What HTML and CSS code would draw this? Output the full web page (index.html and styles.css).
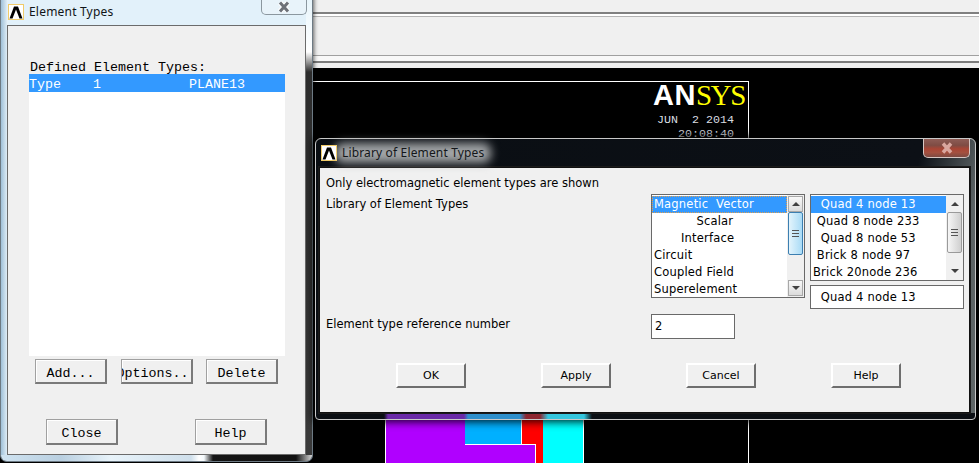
FILE: index.html
```html
<!DOCTYPE html>
<html lang="en">
<head>
    <meta charset="UTF-8">
    <title>Library of Element Types</title>
    <link rel="stylesheet" href="styles.css">
</head>
<body>
    <div class="desktop">
        <div class="main-app">
            <div class="toolbar">
                <div class="toolbar-row first"></div>
                <div class="toolbar-row second"></div>
            </div>
            <div class="graphics">
                <div class="frame"></div>
                <div class="legend">
                    <div class="logo"><span class="logo-an">AN</span><span class="logo-sys">SYS</span></div>
                    <div class="stamp">JUN  2 2014</div>
                    <div class="stamp">20:08:40</div>
                </div>
                <div class="shape purple-top"></div>
                <div class="shape purple-bottom"></div>
                <div class="shape blue"></div>
                <div class="shape red"></div>
                <div class="shape cyan"></div>
                <div class="frame-right"></div>
            </div>
        </div>

        <div class="window types-window">
            <div class="titlebar">
                <svg class="app-icon" width="16" height="16" viewBox="0 0 16 16">
                    <rect x="0.5" y="0.5" width="15" height="15" fill="#fff" stroke="#f0cb6a"/>
                    <path d="M1.5 14.5 L6 2.5 H10 L14.5 14.5 H11.5 L8 5.5 L4.5 14.5 Z" fill="#000"/>
                </svg>
                <span class="title-text">Element Types</span>
            </div>
            <div class="close-btn">
                <svg width="14" height="12" viewBox="0 0 14 12">
                    <path d="M3 1.5 L11 10.5 M11 1.5 L3 10.5" stroke="#fff" stroke-width="5"/>
                    <path d="M3 1.5 L11 10.5 M11 1.5 L3 10.5" stroke="#6d7178" stroke-width="3"/>
                </svg>
            </div>
            <div class="client mono">
                <div class="defined-label">Defined Element Types:</div>
                <div class="defined-list">
                    <div class="defined-row selected">Type    1           PLANE13</div>
                </div>
                <div class="old-buttons top-row">
                    <button class="old-btn"><span>Add...</span></button>
                    <button class="old-btn"><span>Options...</span></button>
                    <button class="old-btn"><span>Delete</span></button>
                </div>
                <div class="old-buttons bottom-row">
                    <button class="old-btn"><span>Close</span></button>
                    <button class="old-btn"><span>Help</span></button>
                </div>
            </div>
        </div>

        <div class="window library-window">
            <div class="titlebar">
                <svg class="app-icon" width="16" height="16" viewBox="0 0 16 16">
                    <rect x="0.5" y="0.5" width="15" height="15" fill="#fff" stroke="#f0cb6a"/>
                    <path d="M1.5 14.5 L6 2.5 H10 L14.5 14.5 H11.5 L8 5.5 L4.5 14.5 Z" fill="#000"/>
                </svg>
                <span class="title-text glow">Library of Element Types</span>
            </div>
            <div class="close-btn red">
                <svg width="14" height="12" viewBox="0 0 14 12">
                    <path d="M3 1.5 L11 10.5 M11 1.5 L3 10.5" stroke="#d9a79f" stroke-width="3.4"/>
                </svg>
            </div>
            <div class="client sans">
                <div class="note">Only electromagnetic element types are shown</div>
                <div class="picker-row">
                    <div class="picker-label">Library of Element Types</div>
                    <div class="listbox family">
                        <div class="list-items">
                            <div class="item selected focused">Magnetic  Vector</div>
                            <div class="item">           Scalar</div>
                            <div class="item">       Interface</div>
                            <div class="item">Circuit</div>
                            <div class="item">Coupled Field</div>
                            <div class="item">Superelement</div>
                        </div>
                        <div class="scrollbar">
                            <div class="sb-btn"><i class="arrow up"></i></div>
                            <div class="sb-track"><div class="thumb blue-thumb"><i class="grip"></i></div></div>
                            <div class="sb-btn"><i class="arrow down"></i></div>
                        </div>
                    </div>
                    <div class="type-col">
                        <div class="listbox types">
                            <div class="list-items">
                                <div class="item selected">  Quad 4 node 13</div>
                                <div class="item"> Quad 8 node 233</div>
                                <div class="item">  Quad 8 node 53</div>
                                <div class="item"> Brick 8 node 97</div>
                                <div class="item">Brick 20node 236</div>
                            </div>
                            <div class="scrollbar flat">
                                <div class="sb-btn"><i class="arrow up"></i></div>
                                <div class="sb-track"><div class="thumb gray-thumb"><i class="grip"></i></div></div>
                                <div class="sb-btn"><i class="arrow down"></i></div>
                            </div>
                        </div>
                        <div class="textbox">  Quad 4 node 13</div>
                    </div>
                </div>
                <div class="ref-row">
                    <div class="picker-label">Element type reference number</div>
                    <div class="ref-input">2</div>
                </div>
                <div class="dialog-buttons">
                    <button class="dlg-btn">OK</button>
                    <button class="dlg-btn">Apply</button>
                    <button class="dlg-btn">Cancel</button>
                    <button class="dlg-btn">Help</button>
                </div>
            </div>
        </div>
    </div>
</body>
</html>
```

FILE: styles.css
```css
* {
    margin: 0;
    padding: 0;
    box-sizing: border-box;
}

html, body {
    width: 979px;
    height: 463px;
    overflow: hidden;
    background: #000;
}

.desktop {
    position: relative;
    width: 979px;
    height: 463px;
    overflow: hidden;
}

.main-app {
    display: flex;
    flex-direction: column;
    height: 100%;
}

.toolbar {
    height: 68px;
    background: #f0f0f0;
}

.toolbar-row.first {
    height: 17px;
    border-bottom: 1px solid #b4b4b4;
    box-shadow: inset 0 -2px 0 #fff, inset 0 -4px 0 #808080;
}

.toolbar-row.second {
    height: 46px;
    border-bottom: 2px solid #7c7c7c;
    box-shadow: inset 0 -5px 0 #f8f8f8, inset 0 -6px 0 #a0a0a0;
}

.graphics {
    position: relative;
    flex: 1;
    background: #000;
}

/* graphics canvas, coordinates are relative to y=68 */
.frame {
    position: absolute;
    left: 300px;
    top: 13px;
    width: 449px;
    height: 120px;
    border-top: 1px solid #fff;
    border-right: 1px solid #fff;
}

.frame-right {
    position: absolute;
    left: 748px;
    top: 340px;
    width: 1px;
    height: 60px;
    background: #fff;
}

.legend {
    position: absolute;
    left: 653px;
    top: 12px;
    width: 81px;
}

.logo {
    height: 33px;
    line-height: 30px;
    font-size: 29px;
    white-space: nowrap;
}

.logo-an {
    font-family: "Liberation Sans", sans-serif;
    font-weight: 700;
    color: #fff;
    letter-spacing: 0.5px;
}

.logo-sys {
    font-family: "Liberation Serif", serif;
    color: #ffff00;
    letter-spacing: -1.4px;
}

.stamp {
    font-family: "Liberation Mono", monospace;
    font-size: 11.67px;
    line-height: 14px;
    color: #d8dde0;
    text-align: right;
    white-space: pre;
}

.shape {
    position: absolute;
}

.purple-top {
    left: 385px;
    top: 340px;
    width: 80px;
    height: 60px;
    background: #b000ff;
    border-left: 1px solid #fff;
}

.purple-bottom {
    left: 385px;
    top: 376px;
    width: 151px;
    height: 24px;
    background: linear-gradient(90deg, #b000ff 79px, #fff 79px) top / 100% 1px no-repeat, #b000ff;
    border-left: 1px solid #fff;
    border-right: 1px solid #fff;
}

.blue {
    left: 465px;
    top: 340px;
    width: 56px;
    height: 36px;
    background: #00b0ff;
}

.red {
    left: 521px;
    top: 340px;
    width: 22px;
    height: 60px;
    background: #ff0000;
    border-left: 1px solid #fff;
    clip-path: polygon(0 0, 100% 0, 100% 100%, 15px 100%, 15px 36px, 0 36px);
}

.cyan {
    left: 543px;
    top: 340px;
    width: 41px;
    height: 60px;
    background: #00ffff;
    border-right: 1px solid #fff;
}

/* windows */
.window {
    position: absolute;
    font-family: "Noto Sans", sans-serif;
}

.types-window {
    left: 0;
    top: -4px;
    width: 313px;
    height: 466px;
    padding: 0 6px 6px 6px;
    border: 1px solid #6d7a84;
    border-top: 0;
    border-radius: 0 0 7px 7px;
    display: flex;
    flex-direction: column;
    box-shadow: 1px 0 4px rgba(0, 0, 0, 0.6);
    background:
        linear-gradient(90deg, #cfe3f1 0, #b9cfe0 60px, #e8f3fa 110px, #cfdfeb 190px, #fff 198px, #f4f9fc 203px, #151515 212px, #111 295px, #d6d6d6 100%) bottom / 100% 6px no-repeat,
        linear-gradient(180deg, #e6f4fb 0, #fff 56px, #9a9a9a 66px, #2c2c2c 76px, #3a3a3a 100%) right / 6px 100% no-repeat,
        linear-gradient(90deg, #9fc0d8 0, #e9f4fb 100%) left / 7px 100% no-repeat,
        #e2f1fa;
}

.library-window {
    left: 315px;
    top: 138px;
    width: 661px;
    height: 282px;
    padding: 0 5px 6px 3px;
    border: 1px solid #c8c8c8;
    border-radius: 6px 6px 4px 4px;
    display: flex;
    flex-direction: column;
    box-shadow: 0 0 9px 2px rgba(0, 0, 0, 0.85);
    background:
        linear-gradient(90deg, #0b0f14 0, #0b0f14 68px, #6a2aa8 72px, #6a2aa8 148px, #2e8fcb 152px, #2e8fcb 204px, #8d2630 210px, #8d2630 224px, #33c6de 232px, #33c6de 268px, #0b0f14 276px) bottom / 100% 6px no-repeat,
        linear-gradient(103deg, #0a0e13 0, #0c1016 84%, #2e3438 88%, #5c6365 93%, #5f6667 100%);
}

.titlebar {
    flex: none;
    display: flex;
    align-items: center;
    gap: 5px;
    height: 29px;
}

.types-window .titlebar {
    padding: 2px 0 0 1px;
}

.library-window .titlebar {
    position: relative;
    z-index: 0;
    height: 28px;
    padding: 0 0 0 2px;
}

.title-text {
    position: relative;
    font-size: 12px;
    line-height: 16px;
    color: #101418;
    white-space: nowrap;
}

.types-window .title-text {
    letter-spacing: 0.2px;
}

.library-window .title-text {
    letter-spacing: 0.15px;
    color: #14171a;
}

.title-text.glow::before {
    content: "";
    position: absolute;
    left: -7px;
    right: -7px;
    top: -2px;
    bottom: -2px;
    background: #a2a5a7;
    border-radius: 8px;
    filter: blur(5px);
    z-index: -1;
}

.close-btn {
    position: absolute;
    display: flex;
    align-items: center;
    justify-content: center;
    border: 1px solid #8b979f;
    border-top: 0;
    border-radius: 0 0 5px 5px;
}

.types-window .close-btn {
    left: 260px;
    top: 4px;
    width: 46px;
    height: 15px;
    background: #e8f3fa;
}

.close-btn.red {
    left: 607px;
    top: 0;
    width: 47px;
    height: 19px;
    border-color: #d8c8c4;
    background: linear-gradient(180deg, #8f5d56 0, #7e4c44 35%, #a94535 55%, #a4503f 75%, #7d4a42 100%);
}

.client {
    flex: 1;
    background: #f0f0f0;
    border: 1px solid #6b6b6b;
    color: #000;
}

.library-window .client {
    border-color: #111;
    box-shadow: 0 0 0 1px #1a1a1a;
}

/* Element Types list */
.mono {
    font-family: "Liberation Mono", monospace;
    font-size: 13.33px;
}

.defined-label {
    margin: 32px 0 0 22px;
    height: 16px;
    line-height: 20px;
    white-space: pre;
}

.defined-list {
    width: 256px;
    height: 282px;
    margin: 0 0 0 21px;
    background: #fff;
}

.defined-row {
    height: 18px;
    line-height: 21px;
    white-space: pre;
}

.defined-row.selected {
    background: #3399ff;
    color: #fff;
}

.old-buttons {
    display: flex;
}

.old-buttons.top-row {
    margin-top: 3px;
    padding-left: 27px;
    gap: 14px;
}

.old-buttons.top-row .old-btn:last-child {
    margin-left: -1px;
}

.old-buttons.bottom-row {
    margin-top: 35px;
    padding-left: 38px;
    gap: 77px;
}

.old-btn {
    display: flex;
    align-items: center;
    justify-content: center;
    width: 72px;
    height: 26px;
    padding-top: 4px;
    overflow: hidden;
    font: inherit;
    color: #000;
    background: #f0f0f0;
    border: 1px solid #a0a0a0;
    border-right: 2px solid #7a7a7a;
    border-bottom: 2px solid #7a7a7a;
    box-shadow: inset 1px 1px 0 #fff;
    white-space: nowrap;
}

.old-btn span {
    flex: none;
}

.top-row .old-btn {
    height: 25px;
}

/* Library dialog */
.sans {
    font-family: "DejaVu Sans", sans-serif;
    font-size: 11.5px;
    padding: 7px 0 0 6px;
}

.note {
    height: 16px;
    line-height: 16px;
}

.picker-row {
    display: flex;
    margin-top: 3px;
    align-items: flex-start;
}

.picker-label {
    width: 325px;
    flex: none;
    height: 16px;
    line-height: 16px;
    margin-top: 2px;
}

.listbox {
    display: flex;
    background: #fff;
    border: 1px solid #696969;
    box-shadow: inset 0 0 0 1px #fff;
}

.listbox.family {
    width: 154px;
    height: 104px;
}

.type-col {
    margin-left: 5px;
    width: 154px;
}

.listbox.types {
    height: 87px;
}

.list-items {
    flex: 1;
    padding-top: 1px;
}

.item {
    height: 17px;
    line-height: 16px;
    padding-left: 2px;
    letter-spacing: 0.2px;
    white-space: pre;
}

.item.selected {
    background: #3399ff;
    color: #fff;
}

.item.focused {
    outline: 1px dotted #e0a050;
    outline-offset: -1px;
}

.scrollbar {
    flex: none;
    width: 17px;
    display: flex;
    flex-direction: column;
    background: #f0f0f0;
    padding: 1px;
}

.scrollbar.flat .sb-btn {
    border-color: transparent;
    background: #f0f0f0;
}

.sb-btn {
    flex: none;
    height: 16px;
    display: flex;
    align-items: center;
    justify-content: center;
    border: 1px solid #a8a8a8;
    background: linear-gradient(180deg, #f8f8f8, #dcdcdc);
}

.arrow {
    width: 0;
    height: 0;
    border-left: 4px solid transparent;
    border-right: 4px solid transparent;
}

.arrow.up {
    border-bottom: 4px solid #404040;
}

.arrow.down {
    border-top: 4px solid #404040;
}

.sb-track {
    flex: 1;
    min-height: 0;
}

.thumb {
    display: flex;
    align-items: center;
    justify-content: center;
    border-radius: 2px;
}

.blue-thumb {
    height: 43px;
    border: 1px solid #3c7fb1;
    background: linear-gradient(90deg, #e3f4fc, #a9dbf6);
}

.gray-thumb {
    height: 41px;
    border: 1px solid #9a9a9a;
    background: linear-gradient(90deg, #f6f6f6, #cfcfcf);
}

.grip {
    width: 7px;
    height: 7px;
    background: repeating-linear-gradient(180deg, #555 0, #555 1px, transparent 1px, transparent 3px);
}

.textbox {
    height: 24px;
    margin-top: 4px;
    line-height: 22px;
    padding-left: 2px;
    letter-spacing: 0.2px;
    background: #fff;
    border: 1px solid #696969;
    white-space: pre;
}

.ref-row {
    display: flex;
    margin-top: 5px;
}

.ref-input {
    width: 84px;
    height: 25px;
    line-height: 23px;
    padding-left: 3px;
    background: #fff;
    border: 1px solid #696969;
}

.dialog-buttons {
    display: flex;
    gap: 75px;
    margin-top: 24px;
    padding-left: 70px;
}

.dlg-btn {
    width: 70px;
    height: 25px;
    font-family: inherit;
    font-size: 11px;
    color: #000;
    background: #f0f0f0;
    border: 2px solid;
    border-color: #fff #6e6e6e #6e6e6e #fff;
}
```
